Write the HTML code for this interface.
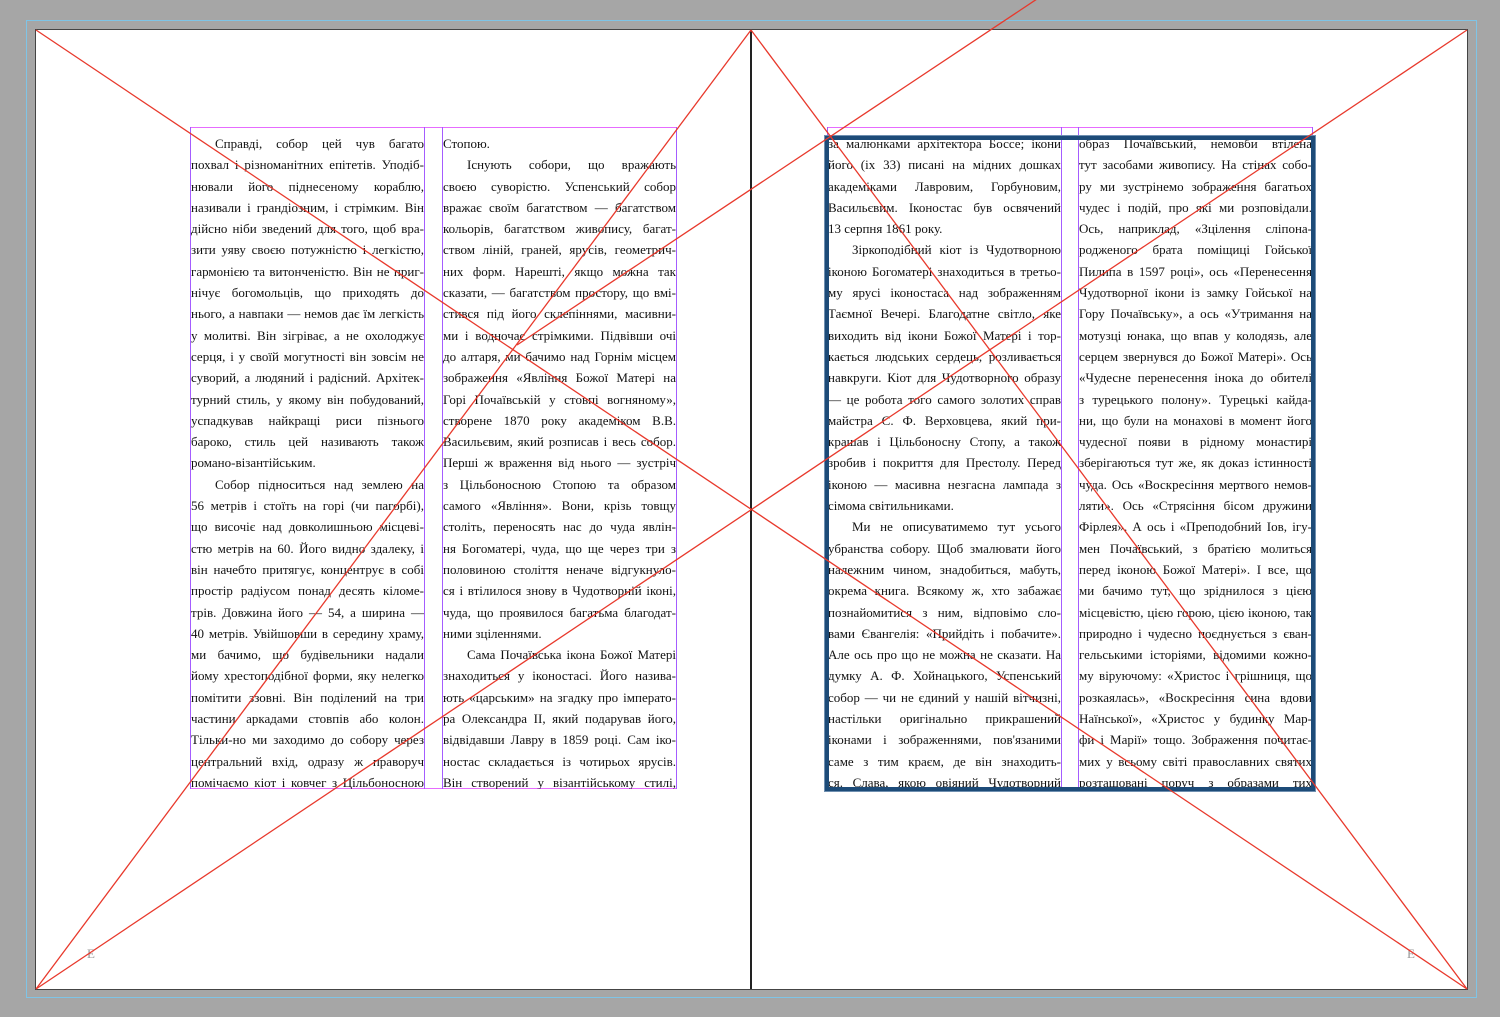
<!DOCTYPE html>
<html><head><meta charset="utf-8"><style>
html,body{margin:0;padding:0;}
body{width:1500px;height:1017px;background:#a6a6a6;position:relative;overflow:hidden;font-family:"Liberation Serif","DejaVu Serif",serif;}
.bleed{position:absolute;left:26px;top:20px;width:1451px;height:978px;border:1px solid #7fc4e6;box-sizing:border-box;}
.page{position:absolute;left:35px;top:29px;width:1433px;height:961px;background:#fff;border:1px solid #444;box-sizing:border-box;}
.spine{position:absolute;left:750px;top:30px;width:2px;height:959px;background:#222;}
.frame{position:absolute;border:1px solid #e66bff;box-sizing:border-box;}
.col{position:absolute;top:127px;width:235px;height:662px;overflow:hidden;border-left:1px solid #a45cff;border-right:1px solid #a45cff;box-sizing:border-box;}
.col .in{position:absolute;left:0;top:6px;width:233px;}
.l{height:21.3px;line-height:21.3px;font-size:13px;color:#111;text-align:justify;text-align-last:justify;white-space:nowrap;overflow:visible;}
.e{text-align-last:left;}
.i{padding-left:24px;}
.sel{position:absolute;left:825px;top:136px;width:490px;height:655px;border:4px solid #1d4b78;box-sizing:border-box;outline:1px solid #6f8fb0;}
.f{position:absolute;font-size:13px;color:#999;}
svg{position:absolute;left:0;top:0;}
</style></head><body>
<div class="bleed"></div>
<div class="page"></div>
<div class="spine"></div>

<div class="frame" style="left:190px;top:127px;width:487px;height:662px;"></div>
<div class="col" style="left:190px;"><div class="in">
<div class="l i">Справді, собор цей чув багато</div>
<div class="l">похвал і різноманітних епітетів. Уподіб-</div>
<div class="l">нювали його піднесеному кораблю,</div>
<div class="l">називали і грандіозним, і стрімким. Він</div>
<div class="l">дійсно ніби зведений для того, щоб вра-</div>
<div class="l">зити уяву своєю потужністю і легкістю,</div>
<div class="l">гармонією та витонченістю. Він не приг-</div>
<div class="l">нічує богомольців, що приходять до</div>
<div class="l">нього, а навпаки — немов дає їм легкість</div>
<div class="l">у молитві. Він зігріває, а не охолоджує</div>
<div class="l">серця, і у своїй могутності він зовсім не</div>
<div class="l">суворий, а людяний і радісний. Архітек-</div>
<div class="l">турний стиль, у якому він побудований,</div>
<div class="l">успадкував найкращі риси пізнього</div>
<div class="l">бароко, стиль цей називають також</div>
<div class="l e">романо-візантійським.</div>
<div class="l i">Собор підноситься над землею на</div>
<div class="l">56 метрів і стоїть на горі (чи пагорбі),</div>
<div class="l">що височіє над довколишньою місцеві-</div>
<div class="l">стю метрів на 60. Його видно здалеку, і</div>
<div class="l">він начебто притягує, концентрує в собі</div>
<div class="l">простір радіусом понад десять кіломе-</div>
<div class="l">трів. Довжина його — 54, а ширина —</div>
<div class="l">40 метрів. Увійшовши в середину храму,</div>
<div class="l">ми бачимо, що будівельники надали</div>
<div class="l">йому хрестоподібної форми, яку нелегко</div>
<div class="l">помітити ззовні. Він поділений на три</div>
<div class="l">частини аркадами стовпів або колон.</div>
<div class="l">Тільки-но ми заходимо до собору через</div>
<div class="l">центральний вхід, одразу ж праворуч</div>
<div class="l">помічаємо кіот і ковчег з Цільбоносною</div>
</div></div>
<div class="col" style="left:442px;"><div class="in">
<div class="l e">Стопою.</div>
<div class="l i">Існують собори, що вражають</div>
<div class="l">своєю суворістю. Успенський собор</div>
<div class="l">вражає своїм багатством — багатством</div>
<div class="l">кольорів, багатством живопису, багат-</div>
<div class="l">ством ліній, граней, ярусів, геометрич-</div>
<div class="l">них форм. Нарешті, якщо можна так</div>
<div class="l">сказати, — багатством простору, що вмі-</div>
<div class="l">стився під його склепіннями, масивни-</div>
<div class="l">ми і водночас стрімкими. Підвівши очі</div>
<div class="l">до алтаря, ми бачимо над Горнім місцем</div>
<div class="l">зображення «Явління Божої Матері на</div>
<div class="l">Горі Почаївській у стовпі вогняному»,</div>
<div class="l">створене 1870 року академіком В.В.</div>
<div class="l">Васильєвим, який розписав і весь собор.</div>
<div class="l">Перші ж враження від нього — зустріч</div>
<div class="l">з Цільбоносною Стопою та образом</div>
<div class="l">самого «Явління». Вони, крізь товщу</div>
<div class="l">століть, переносять нас до чуда явлін-</div>
<div class="l">ня Богоматері, чуда, що ще через три з</div>
<div class="l">половиною століття неначе відгукнуло-</div>
<div class="l">ся і втілилося знову в Чудотворній іконі,</div>
<div class="l">чуда, що проявилося багатьма благодат-</div>
<div class="l e">ними зціленнями.</div>
<div class="l i">Сама Почаївська ікона Божої Матері</div>
<div class="l">знаходиться у іконостасі. Його назива-</div>
<div class="l">ють «царським» на згадку про імперато-</div>
<div class="l">ра Олександра II, який подарував його,</div>
<div class="l">відвідавши Лавру в 1859 році. Сам іко-</div>
<div class="l">ностас складається із чотирьох ярусів.</div>
<div class="l">Він створений у візантійському стилі,</div>
</div></div>

<div class="frame" style="left:827px;top:127px;width:486px;height:662px;"></div>
<div class="col" style="left:827px;"><div class="in">
<div class="l">за малюнками архітектора Боссе; ікони</div>
<div class="l">його (іх 33) писані на мідних дошках</div>
<div class="l">академіками Лавровим, Горбуновим,</div>
<div class="l">Васильєвим. Іконостас був освячений</div>
<div class="l e">13 серпня 1861 року.</div>
<div class="l i">Зіркоподібний кіот із Чудотворною</div>
<div class="l">іконою Богоматері знаходиться в третьо-</div>
<div class="l">му ярусі іконостаса над зображенням</div>
<div class="l">Таємної Вечері. Благодатне світло, яке</div>
<div class="l">виходить від ікони Божої Матері і тор-</div>
<div class="l">кається людських сердець, розливається</div>
<div class="l">навкруги. Кіот для Чудотворного образу</div>
<div class="l">— це робота того самого золотих справ</div>
<div class="l">майстра С. Ф. Верховцева, який при-</div>
<div class="l">крашав і Цільбоносну Стопу, а також</div>
<div class="l">зробив і покриття для Престолу. Перед</div>
<div class="l">іконою — масивна незгасна лампада з</div>
<div class="l e">сімома світильниками.</div>
<div class="l i">Ми не описуватимемо тут усього</div>
<div class="l">убранства собору. Щоб змалювати його</div>
<div class="l">належним чином, знадобиться, мабуть,</div>
<div class="l">окрема книга. Всякому ж, хто забажає</div>
<div class="l">познайомитися з ним, відповімо сло-</div>
<div class="l">вами Євангелія: «Прийдіть і побачите».</div>
<div class="l">Але ось про що не можна не сказати. На</div>
<div class="l">думку А. Ф. Хойнацького, Успенський</div>
<div class="l">собор — чи не єдиний у нашій вітчизні,</div>
<div class="l">настільки оригінально прикрашений</div>
<div class="l">іконами і зображеннями, пов'язаними</div>
<div class="l">саме з тим краєм, де він знаходить-</div>
<div class="l">ся. Слава, якою овіяний Чудотворний</div>
</div></div>
<div class="col" style="left:1078px;"><div class="in">
<div class="l">образ Почаївський, немовби втілена</div>
<div class="l">тут засобами живопису. На стінах собо-</div>
<div class="l">ру ми зустрінемо зображення багатьох</div>
<div class="l">чудес і подій, про які ми розповідали.</div>
<div class="l">Ось, наприклад, «Зцілення сліпона-</div>
<div class="l">родженого брата поміщиці Гойської</div>
<div class="l">Пилипа в 1597 році», ось «Перенесення</div>
<div class="l">Чудотворної ікони із замку Гойської на</div>
<div class="l">Гору Почаївську», а ось «Утримання на</div>
<div class="l">мотузці юнака, що впав у колодязь, але</div>
<div class="l">серцем звернувся до Божої Матері». Ось</div>
<div class="l">«Чудесне перенесення інока до обителі</div>
<div class="l">з турецького полону». Турецькі кайда-</div>
<div class="l">ни, що були на монахові в момент його</div>
<div class="l">чудесної появи в рідному монастирі</div>
<div class="l">зберігаються тут же, як доказ істинності</div>
<div class="l">чуда. Ось «Воскресіння мертвого немов-</div>
<div class="l">ляти». Ось «Стрясіння бісом дружини</div>
<div class="l">Фірлея». А ось і «Преподобний Іов, ігу-</div>
<div class="l">мен Почаївський, з братією молиться</div>
<div class="l">перед іконою Божої Матері». І все, що</div>
<div class="l">ми бачимо тут, що зріднилося з цією</div>
<div class="l">місцевістю, цією горою, цією іконою, так</div>
<div class="l">природно і чудесно поєднується з єван-</div>
<div class="l">гельськими історіями, відомими кожно-</div>
<div class="l">му віруючому: «Христос і грішниця, що</div>
<div class="l">розкаялась», «Воскресіння сина вдови</div>
<div class="l">Наїнської», «Христос у будинку Мар-</div>
<div class="l">фи і Марії» тощо. Зображення почитає-</div>
<div class="l">мих у всьому світі православних святих</div>
<div class="l">розташовані поруч з образами тих</div>
</div></div>
<div class="sel"></div>

<div class="f" style="left:87px;top:946px;">E</div>
<div class="f" style="left:1407px;top:946px;">E</div>

<svg width="1500" height="1017" viewBox="0 0 1500 1017">
<g stroke="#e8392c" stroke-width="1.3" fill="none">
<line x1="36" y1="30" x2="1467" y2="989"/>
<line x1="36" y1="989" x2="1467" y2="30"/>
<line x1="751" y1="30" x2="36" y2="989"/>
<line x1="751" y1="30" x2="1467" y2="989"/>
<line x1="517" y1="345" x2="1040" y2="-3"/>
</g>
</svg>
</body></html>
